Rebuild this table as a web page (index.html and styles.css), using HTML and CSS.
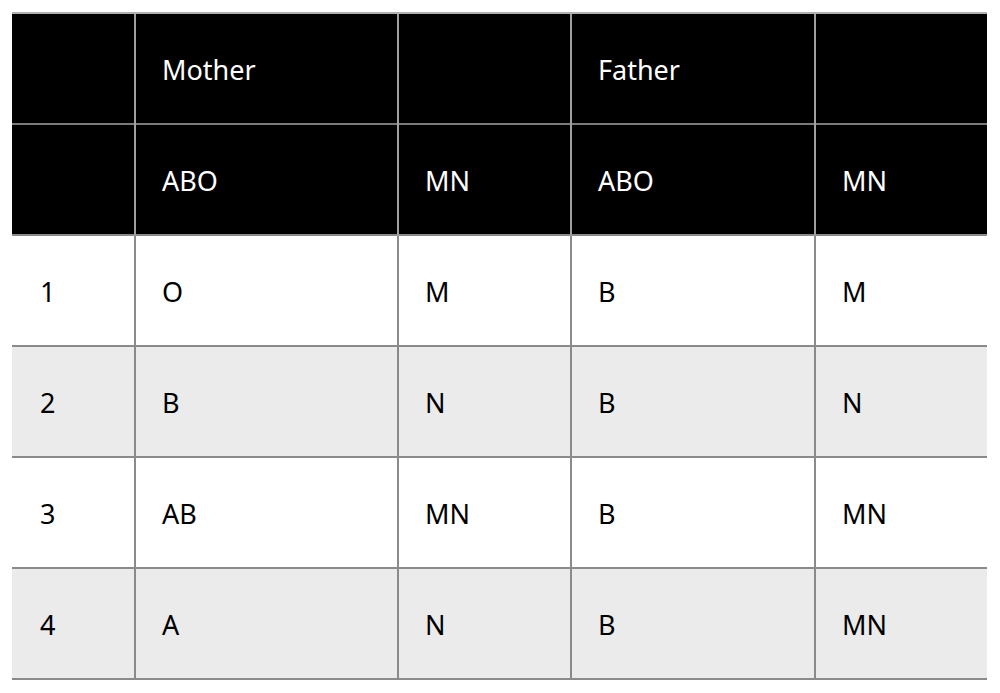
FILE: index.html
```html
<!DOCTYPE html>
<html>
<head>
<meta charset="utf-8">
<link rel="stylesheet" href="styles.css">
</head>
<body>
<table class="grid">
  <colgroup>
    <col class="c1"><col class="c2"><col class="c3"><col class="c4"><col class="c5">
  </colgroup>
  <thead>
    <tr class="h"><th></th><th>Mother</th><th></th><th>Father</th><th></th></tr>
    <tr class="h"><th></th><th>ABO</th><th>MN</th><th>ABO</th><th>MN</th></tr>
  </thead>
  <tbody>
    <tr><td>1</td><td>O</td><td>M</td><td>B</td><td>M</td></tr>
    <tr class="alt"><td>2</td><td>B</td><td>N</td><td>B</td><td>N</td></tr>
    <tr><td>3</td><td>AB</td><td>MN</td><td>B</td><td>MN</td></tr>
    <tr class="alt"><td>4</td><td>A</td><td>N</td><td>B</td><td>MN</td></tr>
  </tbody>
</table>
</body>
</html>
```
FILE: styles.css
```css
html, body {
  margin: 0;
  padding: 0;
  background: #ffffff;
}
body {
  padding: 12px 0 0 12px;
  font-family: "Noto Sans", "Liberation Sans", Arial, sans-serif;
}
.grid {
  border-collapse: collapse;
  table-layout: fixed;
  width: 975px;
  border-top: 2px solid #b0b0b0;
  border-bottom: 2px solid #8a8a8a;
}
.c1 { width: 123px; }
.c2 { width: 263px; }
.c3 { width: 173px; }
.c4 { width: 244px; }
.c5 { width: 172px; }
.grid th, .grid td {
  height: 106px;
  padding: 3px 0 0 26px;
  line-height: 1.2;
  text-align: left;
  vertical-align: middle;
  font-size: 27px;
  font-weight: normal;
  border-left: 2px solid #8a8a8a;
  border-top: 2px solid #8a8a8a;
}
.grid th:first-child, .grid td:first-child {
  border-left: none;
  padding-left: 28px;
}
.grid th {
  background: #000000;
  color: #ffffff;
  border-left-color: #a0a0a0;
  border-top-color: #7a7a7a;
}
.grid thead tr:first-child th {
  border-top: 2px solid #b0b0b0;
}
.grid td {
  color: #000000;
  background: #ffffff;
}
.grid tr.alt td {
  background: #ebebeb;
}
```
